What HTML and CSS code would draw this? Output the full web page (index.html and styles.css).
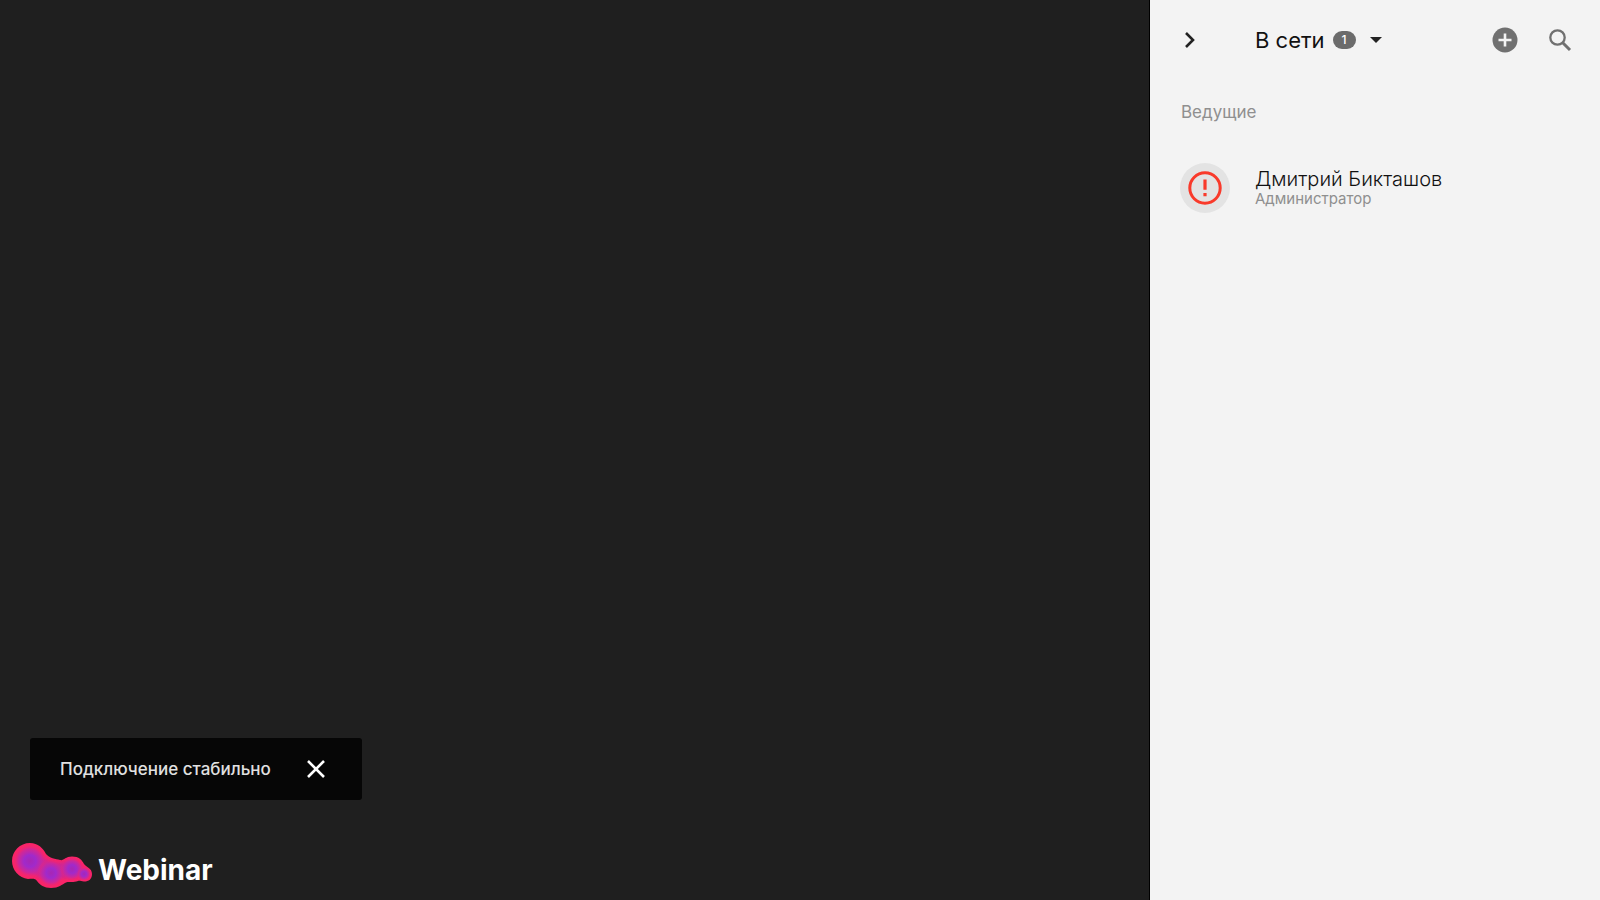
FILE: index.html
```
<!DOCTYPE html>
<html lang="ru">
<head>
    <meta charset="UTF-8">
    <meta name="viewport" content="width=device-width, initial-scale=1.0">
    <title>Webinar</title>
    <link rel="stylesheet" href="styles.css">
</head>
<body>
    <div class="room">
        <main class="stage">
            <div class="toast" role="status">
                <span class="toast-text">Подключение стабильно</span>
                <button class="icon-button" type="button" aria-label="Закрыть">
                    <svg width="32" height="32" viewBox="0 0 32 32">
                        <path d="M8 8L24 24M24 8L8 24" fill="none" stroke="#fff" stroke-width="2.6"/>
                    </svg>
                </button>
            </div>
            <a class="logo" href="#">
                <svg width="80" height="46" viewBox="0 0 80 46" aria-hidden="true">
                    <defs>
                        <radialGradient id="blob">
                            <stop offset="0" stop-color="#a826b4"/>
                            <stop offset="0.35" stop-color="#a02acb"/>
                            <stop offset="0.7" stop-color="#c828a0" stop-opacity="0.8"/>
                            <stop offset="1" stop-color="#fa2468" stop-opacity="0"/>
                        </radialGradient>
                        <filter id="soft" x="-20%" y="-40%" width="140%" height="180%">
                            <feGaussianBlur stdDeviation="2"/>
                        </filter>
                    </defs>
                    <path fill="#f92468" d="M18 0C26 0 31 5 34 11C37 15 44 16 48 17C52 18 53 13.500 60 13.500C67 13.500 70 17 72 21C74 24 80 25 80 31C80 36 77 38.500 72 38.500C69 38.500 68 37.500 66 38C60 40 57 38 54 39.500C50 41.500 47 45 39 45C32 45 28 42 25 38C23 35 20 36 16 36C7 35 0 27 0 18C0 8 8 0 18 0Z"/>
                    <g filter="url(#soft)" fill="none" stroke="#b828ac" stroke-linecap="round" stroke-linejoin="round">
                        <path stroke-width="17" d="M18 18L38 29"/>
                        <path stroke-width="14" d="M38 29L60 26"/>
                        <path stroke-width="7" d="M60 26L72 31"/>
                    </g>
                    <circle cx="18" cy="18" r="17" fill="url(#blob)"/>
                    <circle cx="39" cy="30" r="14" fill="url(#blob)"/>
                    <circle cx="60" cy="26" r="12" fill="url(#blob)"/>
                    <circle cx="72" cy="31" r="7" fill="url(#blob)"/>
                </svg>
                <span>Webinar</span>
            </a>
        </main>

        <aside class="sidebar">
            <header class="sidebar-header">
                <button class="icon-button" type="button" aria-label="Свернуть">
                    <svg width="20" height="20" viewBox="0 0 20 20">
                        <path d="M6 3L13 10L6 17" fill="none" stroke="#222" stroke-width="2.6"/>
                    </svg>
                </button>
                <button class="filter" type="button" aria-haspopup="true">
                    <span>В сети</span>
                    <span class="count">1</span>
                    <svg class="caret" width="12" height="6" viewBox="0 0 12 6" aria-hidden="true">
                        <path d="M0 0H12L6 6Z" fill="#222"/>
                    </svg>
                </button>
                <button class="icon-button" type="button" aria-label="Добавить">
                    <svg width="26" height="26" viewBox="0 0 26 26">
                        <circle cx="13" cy="13" r="12.5" fill="#707070"/>
                        <path d="M13 6.5V19.5M6.5 13H19.5" stroke="#f3f3f3" stroke-width="2.6"/>
                    </svg>
                </button>
                <button class="icon-button" type="button" aria-label="Поиск">
                    <svg width="24" height="24" viewBox="0 0 24 24">
                        <circle cx="9.5" cy="9.500" r="7.2" fill="none" stroke="#707070" stroke-width="2.3"/>
                        <path d="M14.5 14.5L22 22" stroke="#707070" stroke-width="3"/>
                    </svg>
                </button>
            </header>

            <h2 class="group-title">Ведущие</h2>
            <ul class="people">
                <li class="person">
                    <span class="avatar">
                        <svg width="34" height="34" viewBox="0 0 34 34" aria-hidden="true">
                            <circle cx="17" cy="17" r="15.2" fill="none" stroke="#f93a2b" stroke-width="3"/>
                            <path d="M17 8.5V18.7M17 22V25.3" stroke="#f93a2b" stroke-width="3.2"/>
                        </svg>
                    </span>
                    <div class="person-info">
                        <div class="person-name">Дмитрий Бикташов</div>
                        <div class="person-role">Администратор</div>
                    </div>
                </li>
            </ul>
        </aside>
    </div>
</body>
</html>
```
FILE: styles.css
```
* {
    box-sizing: border-box;
}

body {
    margin: 0;
    font-family: Inter, "Liberation Sans", sans-serif;
    background-color: #1f1f1f;
}

button {
    padding: 0;
    border: none;
    background: none;
    color: inherit;
    font-family: inherit;
    cursor: pointer;
}

.room {
    display: flex;
    min-height: 100vh;
}

.stage {
    flex: 1;
    display: flex;
    flex-direction: column;
    justify-content: flex-end;
    align-items: flex-start;
    padding: 11px 12px;
}

.toast {
    display: flex;
    align-items: center;
    gap: 29px;
    margin: 0 18px 43px;
    padding: 15px 30px;
    border-radius: 3px;
    background-color: #060606;
}

.toast-text {
    color: #e0e0e0;
    font-size: 17px;
    font-weight: 500;
}

.icon-button {
    display: flex;
}

.logo {
    display: flex;
    align-items: center;
    gap: 6px;
    color: #fff;
    font-size: 28px;
    font-weight: 700;
    line-height: 34px;
    text-decoration: none;
}

.logo span {
    padding-top: 8px;
}

.sidebar {
    width: 451px;
    padding: 0 28px 0 30px;
    border-left: 1px solid #000;
    background-color: #f3f3f3;
}

.sidebar-header {
    display: flex;
    align-items: center;
    gap: 30px;
    height: 80px;
}

.filter {
    flex: 1;
    display: flex;
    align-items: center;
    margin-left: 25px;
    color: #111;
    font-size: 22px;
    line-height: 28px;
}

.count {
    margin: 0 14px 0 8px;
    padding: 0 9px;
    border-radius: 9px;
    background-color: #6b6b6b;
    color: #fff;
    font-size: 12px;
    font-weight: 500;
    line-height: 18px;
}

.group-title {
    margin: 20px 0 0 1px;
    color: #8f8f8f;
    font-size: 17px;
    font-weight: 400;
    line-height: 24px;
}

.people {
    margin: 39px 0 0;
    padding: 0;
    list-style: none;
}

.person {
    display: flex;
    align-items: center;
    gap: 25px;
}

.avatar {
    display: flex;
    justify-content: center;
    align-items: center;
    width: 50px;
    height: 50px;
    border-radius: 50%;
    background-color: #e3e3e3;
}

.person-name {
    color: #111;
    font-size: 20px;
    font-weight: 300;
    line-height: 22px;
}

.person-role {
    color: #8f8f8f;
    font-size: 15px;
    line-height: 18px;
}
```
